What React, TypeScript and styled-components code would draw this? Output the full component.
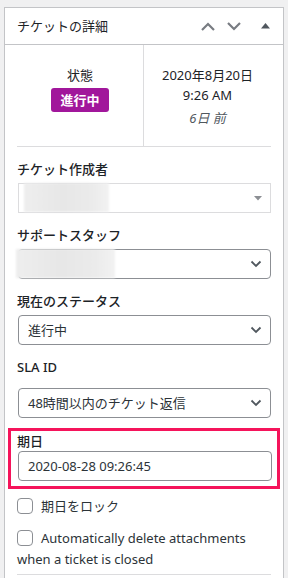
import React from "react";
import styled, { createGlobalStyle } from "styled-components";

const Global = createGlobalStyle`
  html, body { margin: 0; padding: 0; background: #f0f0f1; }
  body {
    font-family: "Noto Sans", "Noto Sans CJK JP", sans-serif;
    font-size: 13px;
    line-height: 20px;
    color: #1d2327;
  }
  * { box-sizing: border-box; }
`;

const Panel = styled.div`
  margin: 7px 4px 0 4px;
  background: #fff;
  border: 1px solid #c3c4c7;
  min-height: 600px;
`;

const Header = styled.div`
  height: 37px;
  display: flex;
  align-items: center;
  border-bottom: 1px solid #c3c4c7;
  padding-left: 12px;
`;

const Title = styled.h2`
  margin: 0;
  flex: 1;
  font-size: 13px;
  font-weight: 400;
  line-height: 20px;
  color: #1d2327;
`;

const HeaderButton = styled.span<{ $w: number }>`
  width: ${(p) => p.$w}px;
  height: 36px;
  display: flex;
  align-items: center;
  justify-content: center;
  color: #787c82;
`;

const Body = styled.div`
  padding: 0 12px;
`;

const InfoGrid = styled.div`
  display: grid;
  grid-template-columns: 1fr 1fr;
  border-bottom: 1px solid #dcdcde;
`;

const InfoCell = styled.div<{ $divider?: boolean }>`
  text-align: center;
  padding: 20px 0 18px;
  border-right: ${(p) => (p.$divider ? "1px solid #dcdcde" : "none")};
  display: flex;
  flex-direction: column;
  align-items: center;
`;

const Badge = styled.span`
  display: inline-block;
  margin-top: 3px;
  padding: 0 9px;
  height: 24px;
  line-height: 24px;
  border-radius: 3px;
  background: #a1169b;
  color: #fff;
  font-weight: 700;
`;

const Ago = styled.span`
  margin-top: 3px;
  font-style: italic;
  color: #50575e;
`;

const Field = styled.div<{ $top?: number; $gap?: number }>`
  margin-top: ${(p) => p.$top ?? 12}px;
  display: flex;
  flex-direction: column;
  gap: ${(p) => p.$gap ?? 4}px;
`;

const Label = styled.label`
  font-weight: 500;
  line-height: 20px;
  color: #1d2327;
`;

const SelectBox = styled.div<{ $light?: boolean }>`
  position: relative;
  height: 30px;
  margin-left: 1px;
  display: flex;
  align-items: center;
  justify-content: space-between;
  padding: 0 8px 0 9px;
  border: 1px solid ${(p) => (p.$light ? "#dcdcde" : "#8c8f94")};
  border-radius: ${(p) => (p.$light ? "0" : "4px")};
  color: #2c3338;
  background: #fff;
`;

const Redact = styled.div<{ $left: number; $width: number }>`
  position: absolute;
  left: ${(p) => p.$left}px;
  width: ${(p) => p.$width}px;
  top: -1px;
  bottom: 0px;
  background: linear-gradient(90deg, #eeeeee, #e7e7e7 45%, #ebebeb 80%, #f2f2f2);
  filter: blur(1px);
`;

const Highlight = styled.div`
  margin: 10px -9px 0 -9px;
  border: 3px solid #f5145b;
  padding: 0 5px 5px 6px;
  display: flex;
  flex-direction: column;
`;

const CheckRow = styled.div<{ $top: number; $lh: number }>`
  margin-top: ${(p) => p.$top}px;
  line-height: ${(p) => p.$lh}px;
  color: #2c3338;
`;

const Check = styled.span`
  display: inline-block;
  width: 16px;
  height: 16px;
  border: 1px solid #8c8f94;
  border-radius: 4px;
  background: #fff;
  vertical-align: -3px;
  margin-right: 8px;
`;

const BottomRule = styled.div`
  margin-top: 4px;
  border-top: 1px solid #dcdcde;
`;

const Chevron = () => (
  <svg width="12" height="8" viewBox="0 0 12 8">
    <polyline points="1.5,1.5 6,6 10.5,1.5" fill="none" stroke="#50575e" strokeWidth="1.8" />
  </svg>
);

const SmallTri = () => (
  <svg width="8" height="5" viewBox="0 0 8 5">
    <polygon points="0,0 8,0 4,4.5" fill="#8c8f94" />
  </svg>
);

export default function App() {
  return (
    <>
      <Global />
      <Panel>
        <Header>
          <Title>チケットの詳細</Title>
          <HeaderButton $w={26}>
            <svg width="14" height="9" viewBox="0 0 14 9">
              <polyline points="1,8 7,2 13,8" fill="none" stroke="currentColor" strokeWidth="2.2" />
            </svg>
          </HeaderButton>
          <HeaderButton $w={26}>
            <svg width="14" height="9" viewBox="0 0 14 9">
              <polyline points="1,1 7,7 13,1" fill="none" stroke="currentColor" strokeWidth="2.2" />
            </svg>
          </HeaderButton>
          <HeaderButton $w={36}>
            <svg width="9" height="6" viewBox="0 0 9 6">
              <polygon points="4.5,0 9,5.5 0,5.5" fill="#50575e" />
            </svg>
          </HeaderButton>
        </Header>
        <Body>
          <InfoGrid>
            <InfoCell $divider>
              <span>状態</span>
              <Badge>進行中</Badge>
            </InfoCell>
            <InfoCell>
              <span>2020年8月20日</span>
              <span>9:26 AM</span>
              <Ago>6日 前</Ago>
            </InfoCell>
          </InfoGrid>

          <Field>
            <Label>チケット作成者</Label>
            <SelectBox $light>
              <Redact $left={5} $width={85} />
              <span />
              <SmallTri />
            </SelectBox>
          </Field>

          <Field>
            <Label>サポートスタッフ</Label>
            <SelectBox>
              <Redact $left={-3} $width={99} />
              <span />
              <Chevron />
            </SelectBox>
          </Field>

          <Field>
            <Label>現在のステータス</Label>
            <SelectBox>
              <span>進行中</span>
              <Chevron />
            </SelectBox>
          </Field>

          <Field $gap={11}>
            <Label>SLA ID</Label>
            <SelectBox>
              <span>48時間以内のチケット返信</span>
              <Chevron />
            </SelectBox>
          </Field>

          <Highlight>
            <Label>期日</Label>
            <SelectBox>
              <span>2020-08-28 09:26:45</span>
            </SelectBox>
          </Highlight>

          <CheckRow $top={7} $lh={20}>
            <Check />
            期日をロック
          </CheckRow>
          <CheckRow $top={12} $lh={21}>
            <Check />
            Automatically delete attachments when a ticket is closed
          </CheckRow>
          <BottomRule />
        </Body>
      </Panel>
    </>
  );
}
